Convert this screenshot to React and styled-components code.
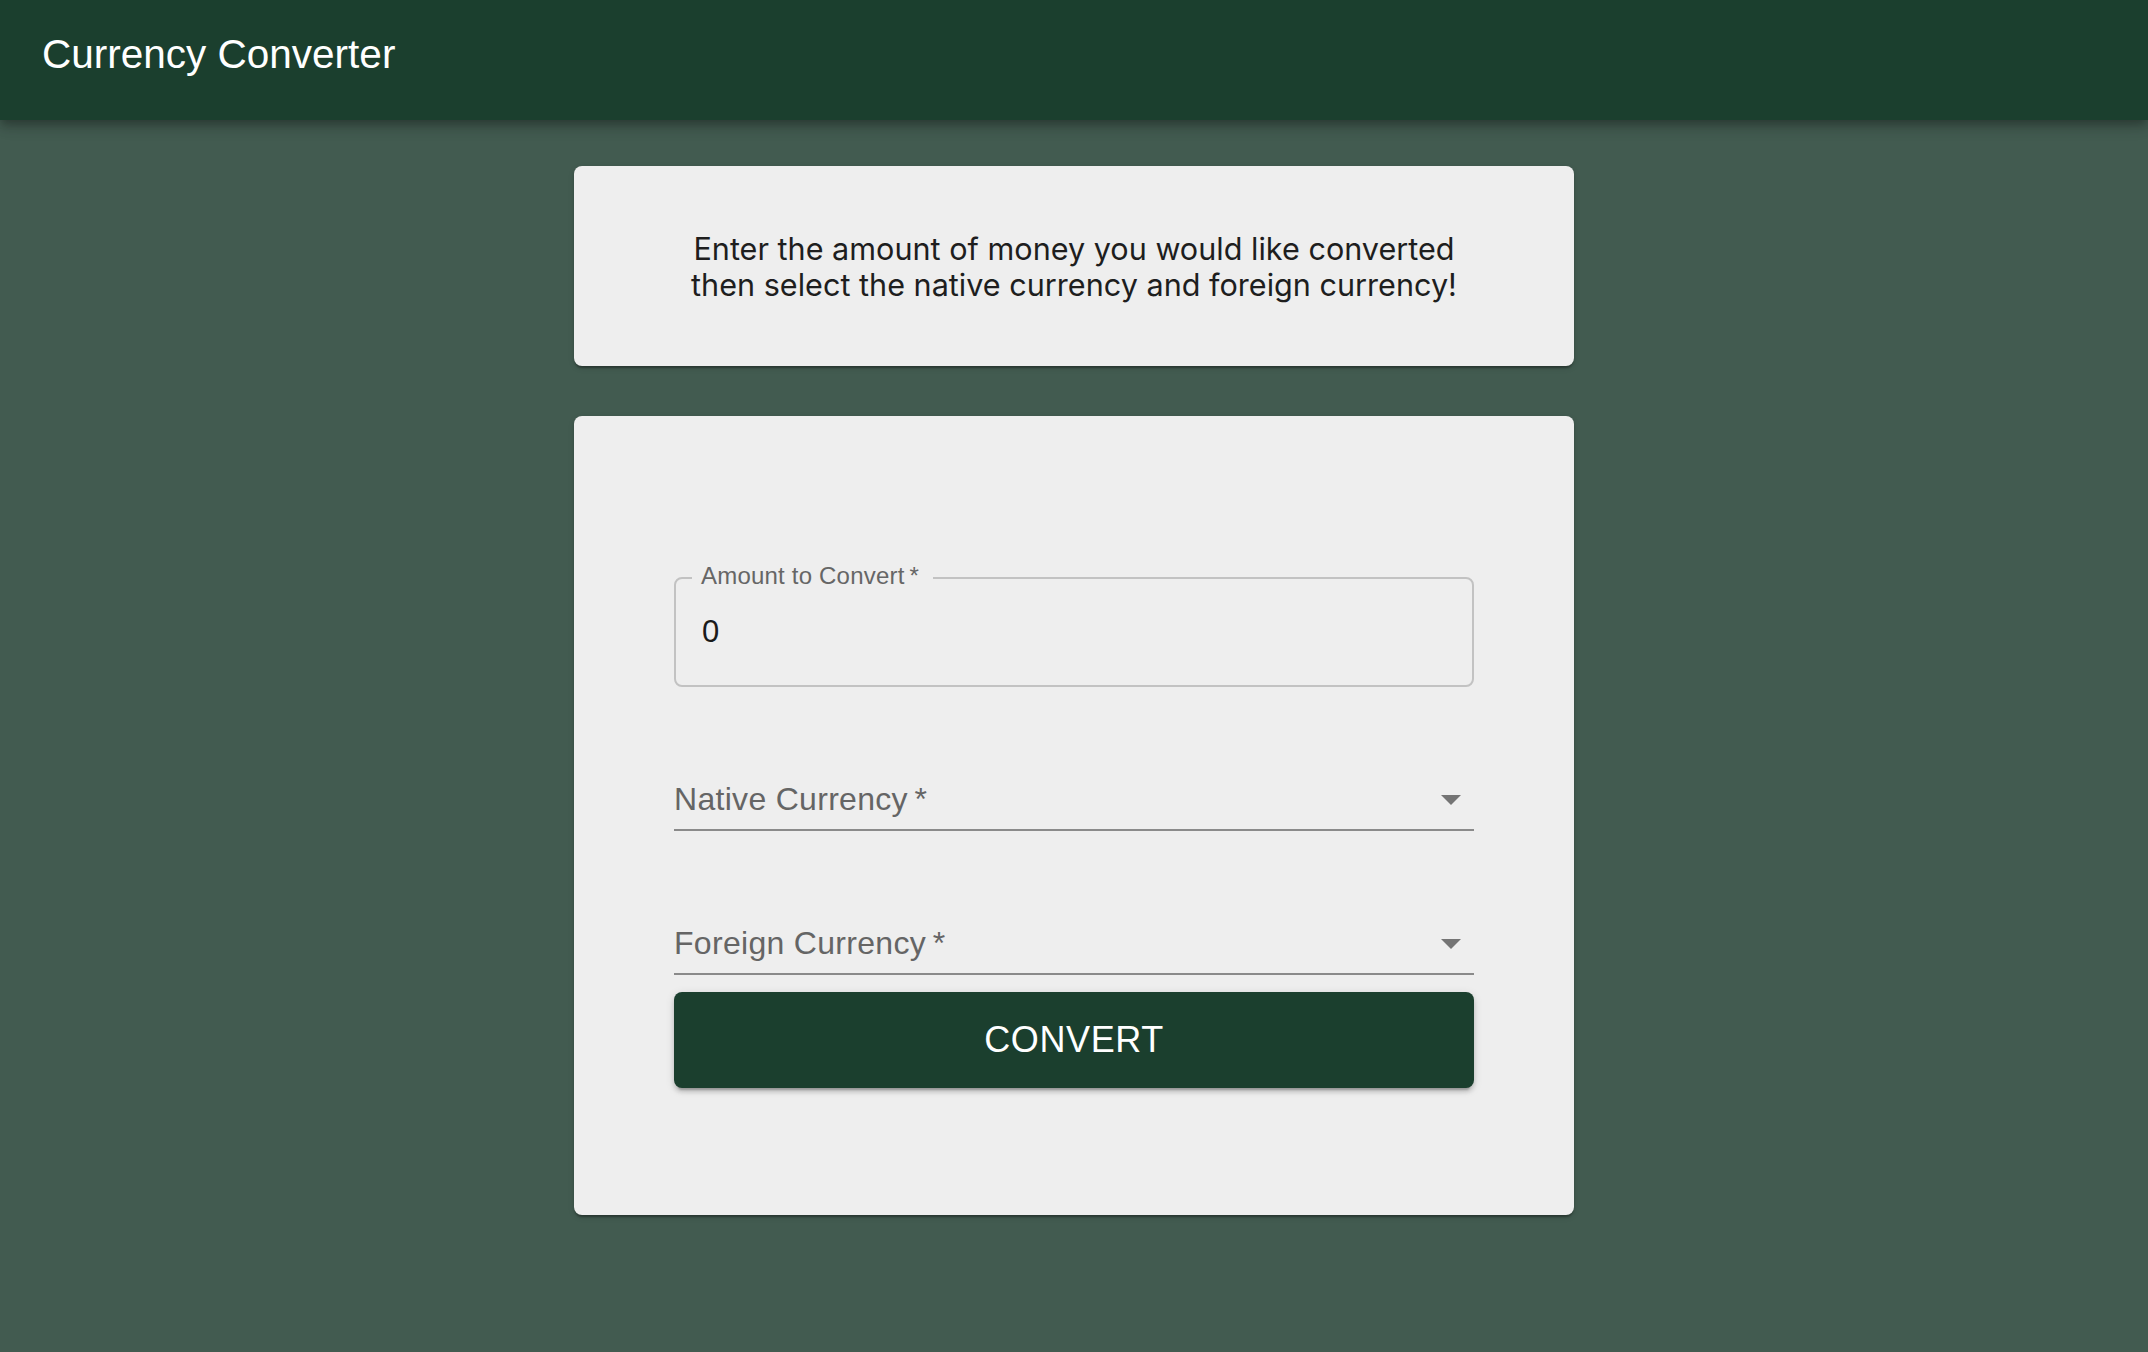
import React, { useState } from "react";
import styled, { createGlobalStyle } from "styled-components";

const GlobalStyle = createGlobalStyle`
  html, body {
    margin: 0;
    padding: 0;
    background: #425b50;
  }
  * {
    box-sizing: border-box;
  }
`;

const Page = styled.div`
  min-height: 100vh;
  background: #425b50;
  font-family: "Liberation Sans", Arial, sans-serif;
`;

const AppBar = styled.header`
  height: 120px;
  background: #1b3f2e;
  display: flex;
  align-items: center;
  padding: 0 42px 11px;
  box-shadow: 0 4px 8px -2px rgba(0, 0, 0, 0.2), 0 8px 10px 0 rgba(0, 0, 0, 0.14),
    0 2px 20px 0 rgba(0, 0, 0, 0.12);
  position: relative;
  z-index: 1;
`;

const Title = styled.h1`
  margin: 0;
  color: #ffffff;
  font-size: 40.5px;
  font-weight: 400;
`;

const Main = styled.main`
  display: flex;
  flex-direction: column;
  align-items: center;
  gap: 50px;
  padding: 46px 0 80px;
`;

const Card = styled.section`
  width: 1000px;
  background: #eeeeee;
  border-radius: 8px;
  box-shadow: 0 4px 2px -2px rgba(0, 0, 0, 0.2), 0 2px 2px 0 rgba(0, 0, 0, 0.14),
    0 2px 6px 0 rgba(0, 0, 0, 0.12);
`;

const IntroCard = styled(Card)`
  height: 200px;
  display: flex;
  align-items: center;
  justify-content: center;
`;

const Intro = styled.p`
  margin: 2px 0 0;
  text-align: center;
  font-family: Inter, "Liberation Sans", sans-serif;
  font-size: 30.6px;
  line-height: 36px;
  color: #1e1e1e;
`;

const FormCard = styled(Card)`
  padding: 161px 100px 127px;
`;

const Form = styled.form`
  display: flex;
  flex-direction: column;
`;

const OutlinedField = styled.div`
  position: relative;
  height: 110px;
  border: 2px solid #c2c2c2;
  border-radius: 8px;
  display: flex;
  align-items: center;
  padding: 0 26px;
`;

const FloatingLabel = styled.label`
  position: absolute;
  top: -16px;
  left: 16px;
  padding: 0 14px 0 9px;
  background: #eeeeee;
  font-size: 24px;
  line-height: 26px;
  letter-spacing: 0.2px;
  color: #666666;
`;

const ValueInput = styled.input`
  width: 100%;
  border: none;
  outline: none;
  background: transparent;
  font-family: "Liberation Sans", Arial, sans-serif;
  font-size: 31px;
  color: #1a1a1a;
  padding: 0;
`;

const SelectRow = styled.div`
  height: 60px;
  margin-top: ${(p) => p.$gap}px;
  border-bottom: 2px solid #8a8a8a;
  display: flex;
  align-items: center;
  justify-content: space-between;
  padding-right: 13px;
  cursor: pointer;
`;

const SelectLabel = styled.span`
  font-size: 32px;
  line-height: 36px;
  margin-bottom: 2px;
  letter-spacing: 0.3px;
  color: #656565;
`;

const Arrow = styled.svg`
  width: 20px;
  height: 10px;
  fill: #747474;
`;

const ConvertButton = styled.button`
  margin-top: 17px;
  height: 96px;
  border: none;
  border-radius: 8px;
  background: #1b3f2e;
  color: #ffffff;
  font-family: "Liberation Sans", Arial, sans-serif;
  font-size: 36px;
  letter-spacing: 0.6px;
  text-transform: uppercase;
  cursor: pointer;
  box-shadow: 0 6px 2px -4px rgba(0, 0, 0, 0.2), 0 4px 4px 0 rgba(0, 0, 0, 0.14),
    0 2px 10px 0 rgba(0, 0, 0, 0.12);
`;

const Select = ({ label, gap }) => (
  <SelectRow $gap={gap}>
    <SelectLabel>{label}{"\u2009*"}</SelectLabel>
    <Arrow viewBox="0 0 20 10">
      <path d="M0 0l10 10 10-10z" />
    </Arrow>
  </SelectRow>
);

const App = () => {
  const [amount, setAmount] = useState("0");

  return (
    <Page>
      <GlobalStyle />
      <AppBar>
        <Title>Currency Converter</Title>
      </AppBar>
      <Main>
        <IntroCard>
          <Intro>
            Enter the amount of money you would like converted
            <br />
            then select the native currency and foreign currency!
          </Intro>
        </IntroCard>
        <FormCard>
          <Form onSubmit={(e) => e.preventDefault()}>
            <OutlinedField>
              <FloatingLabel htmlFor="amount">Amount to Convert{"\u2009*"}</FloatingLabel>
              <ValueInput
                id="amount"
                value={amount}
                onChange={(e) => setAmount(e.target.value)}
              />
            </OutlinedField>
            <Select label="Native Currency" gap={84} />
            <Select label="Foreign Currency" gap={84} />
            <ConvertButton type="submit">Convert</ConvertButton>
          </Form>
        </FormCard>
      </Main>
    </Page>
  );
};

export default App;
